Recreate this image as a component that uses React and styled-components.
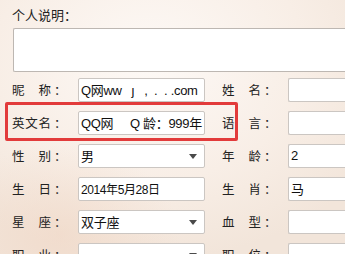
import React from 'react'
import styled, { createGlobalStyle } from 'styled-components'

const GlobalStyle = createGlobalStyle`
    html, body {
        margin: 0;
        padding: 0;
        overflow: hidden;
    }
    body {
        font-family: "Liberation Sans", "Noto Sans CJK SC", sans-serif;
    }
`

const sp = (n) => '\u00a0'.repeat(n)

const rows = [
    { left: '昵称', value: `Q网ww${sp(3)}ȷ${sp(3)},${sp(2)}.${sp(2)}.${sp(1)}.com`, right: '姓名', rightValue: '' },
    { left: '英文名', value: `QQ网${sp(5)}Q 龄：999年`, right: '语言', rightValue: '', marked: true },
    { left: '性别', value: '男', select: true, right: '年龄', rightValue: '2' },
    { left: '生日', value: '2014年5月28日', small: true, right: '生肖', rightValue: '马' },
    { left: '星座', value: '双子座', select: true, right: '血型', rightValue: '' },
    { left: '职业', value: '', select: true, right: '职位', rightValue: '' },
]

function App() {
    return (
        <Page>
            <GlobalStyle />
            <Title>个人说明：</Title>
            <Description />
            <Form>
                {rows.map((row) => (
                    <Row key={row.left}>
                        {row.marked && <Highlight />}
                        <Label>
                            <LabelText>{row.left}</LabelText>
                            <Colon>：</Colon>
                        </Label>
                        <Field small={row.small}>
                            <FieldText>{row.value}</FieldText>
                            {row.select && <Arrow />}
                        </Field>
                        <Label right>
                            <LabelText>{row.right}</LabelText>
                            <Colon>：</Colon>
                        </Label>
                        <Field wide>
                            <FieldText>{row.rightValue}</FieldText>
                        </Field>
                    </Row>
                ))}
            </Form>
        </Page>
    )
}

export default App

const Page = styled.div`
    width: 345px;
    height: 254px;
    box-sizing: border-box;
    padding: 6px 0 0 12px;
    overflow: hidden;
    color: #222;
    background:
        radial-gradient(ellipse 120px 90px at 60px 235px, rgba(240, 214, 196, 0.6), transparent),
        radial-gradient(ellipse 260px 200px at 150px 60px, #fdf9f6 0%, #f8eee6 60%, #f2e5da 100%);
`

const Title = styled.div`
    font-family: "Noto Sans CJK SC", sans-serif;
    font-size: 13px;
    line-height: 18px;
    height: 18px;
`

const Description = styled.div`
    margin: 4px 0 0 1px;
    width: 345px;
    height: 42px;
    background: #fff;
    border: 1px solid #bdb7b2;
    border-right: none;
    border-radius: 2px 0 0 2px;
`

const Form = styled.div`
    margin-top: 1px;
    display: flex;
    flex-direction: column;
`

const Row = styled.div`
    position: relative;
    display: flex;
    align-items: center;
    height: 33px;
    flex-shrink: 0;
`

const Highlight = styled.div`
    position: absolute;
    left: -7px;
    top: -4px;
    width: 227px;
    height: 33px;
    border: 3px solid #e23b3b;
    border-radius: 2px;
    pointer-events: none;
`

const Label = styled.div`
    display: flex;
    align-items: center;
    width: 66px;
    margin-left: ${(p) => (p.right ? '17px' : '0')};
    font-family: "Noto Sans CJK SC", sans-serif;
    font-size: 12.5px;
    flex-shrink: 0;
`

const LabelText = styled.span`
    display: inline-block;
    width: 39px;
    text-align: justify;
    text-align-last: justify;
    white-space: nowrap;
`

const Colon = styled.span`
    margin-left: 3px;
`

const Field = styled.div`
    position: relative;
    box-sizing: border-box;
    width: ${(p) => (p.wide ? '80px' : '127px')};
    height: 24px;
    flex-shrink: 0;
    display: flex;
    align-items: center;
    padding-left: 2px;
    background: #fff;
    border: 1px solid #cbc6c2;
    border-right: ${(p) => (p.wide ? 'none' : '1px solid #cbc6c2')};
    border-radius: 2px;
    overflow: hidden;
    font-size: ${(p) => (p.small ? '12px' : '13px')};
    letter-spacing: ${(p) => (p.small ? '-0.4px' : '-0.3px')};
    color: #111;
`

const FieldText = styled.span`
    white-space: nowrap;
`

const Arrow = styled.span`
    position: absolute;
    right: 7px;
    top: 9px;
    width: 0;
    height: 0;
    border-left: 4px solid transparent;
    border-right: 4px solid transparent;
    border-top: 5px solid #4a4a4a;
`
